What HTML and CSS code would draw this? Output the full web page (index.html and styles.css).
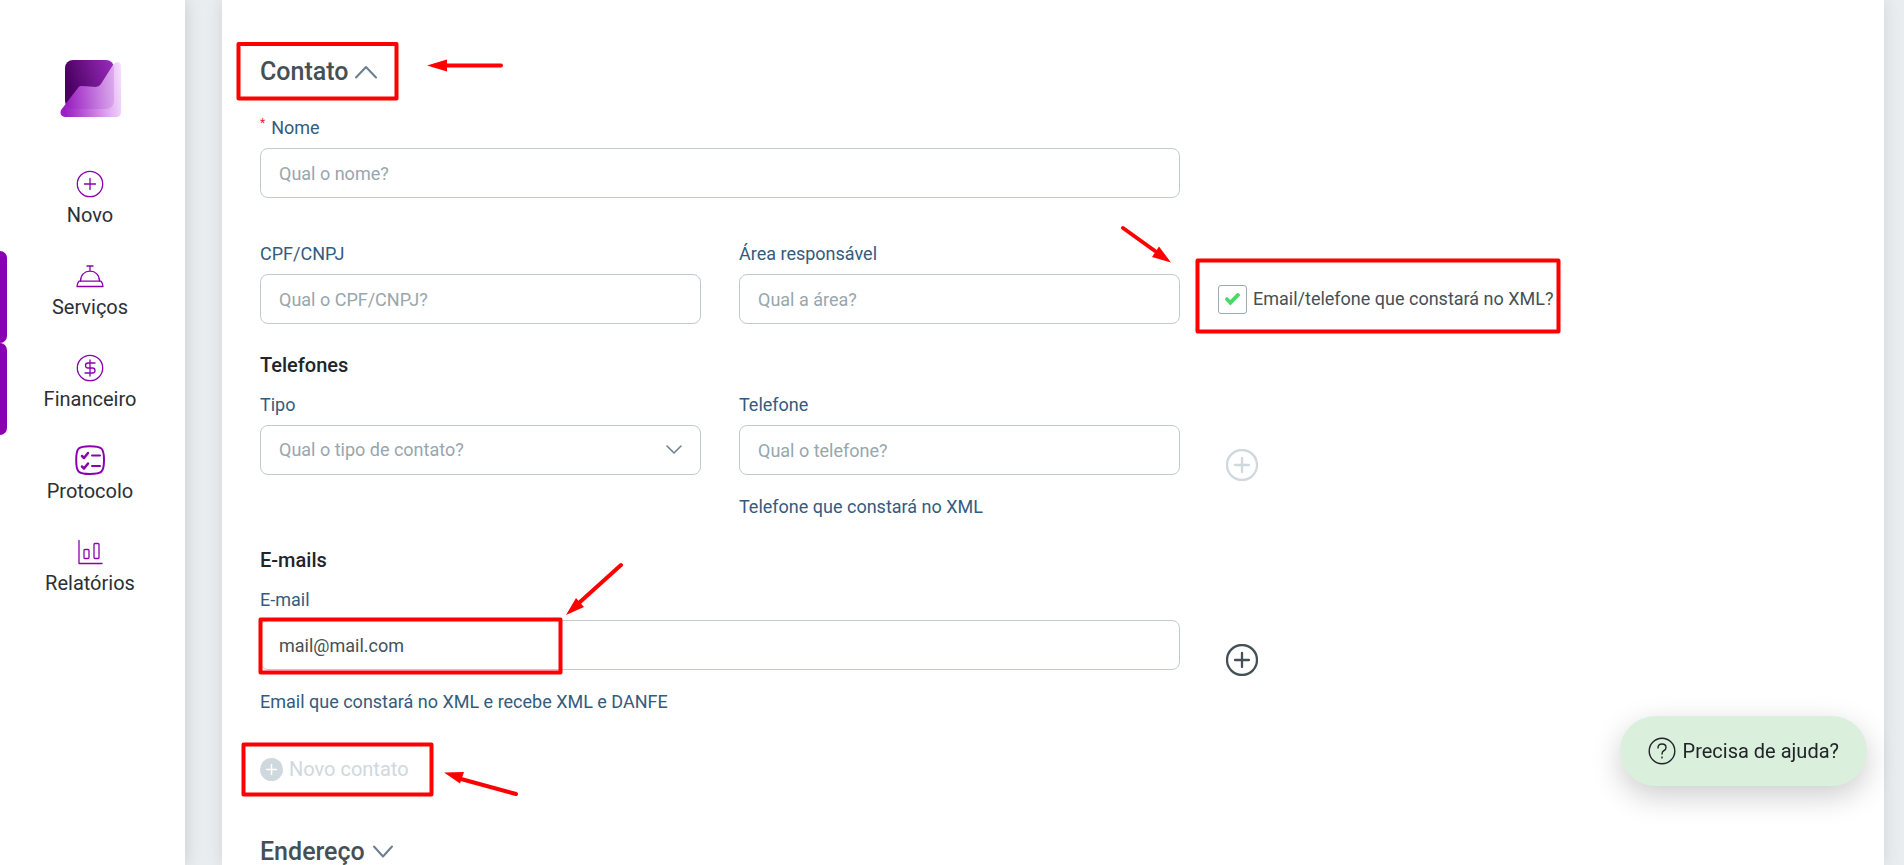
FILE: index.html
```html
<!DOCTYPE html>
<html lang="pt-BR">
<head>
  <meta charset="utf-8">
  <title>Cadastro de cliente</title>
  <link rel="stylesheet" href="styles.css">
</head>
<body>

  <nav class="sidebar">
    <a href="#" class="logo" aria-label="Início">
      <svg width="62" height="58" viewBox="0 0 62 58">
        <defs>
          <linearGradient id="dark" x1="0" x2="1" y1="0.3" y2="0">
            <stop offset="0" stop-color="#4a0060"/>
            <stop offset="1" stop-color="#9c2cc0"/>
          </linearGradient>
          <linearGradient id="light" x1="0" x2="1" y1="0.1" y2="0">
            <stop offset="0" stop-color="#9a1fc4"/>
            <stop offset="0.35" stop-color="#bd62da"/>
            <stop offset="0.7" stop-color="#dfaaf0"/>
            <stop offset="1" stop-color="#f8e0ff"/>
          </linearGradient>
          <linearGradient id="shade" x1="0" x2="1" y1="0" y2="0">
            <stop offset="0" stop-color="#8a12b4"/>
            <stop offset="1" stop-color="#b56ad4"/>
          </linearGradient>
          <clipPath id="fold">
            <path d="M1 50L18 28Q19 26 21 26L36 27Q39 27 41 24L53 5Q55 2 58 2Q61 3 61 6V52Q61 57 56 57H5Q-1 56 1 50Z"/>
          </clipPath>
        </defs>
        <rect x="5" y="0" width="49" height="49" rx="8" fill="url(#dark)"/>
        <path d="M1 50L18 28Q19 26 21 26L36 27Q39 27 41 24L53 5Q55 2 58 2Q61 3 61 6V52Q61 57 56 57H5Q-1 56 1 50Z" fill="url(#light)"/>
        <rect x="5" y="0" width="49" height="49" rx="8" fill="url(#shade)" opacity="0.3" clip-path="url(#fold)"/>
      </svg>
    </a>

    <a href="#" class="nav-item">
      <svg width="30" height="30" viewBox="0 0 30 30">
        <circle cx="15" cy="15" r="12.7"/>
        <path d="M15 9.5v11M9.5 15h11"/>
      </svg>
      Novo
    </a>
    <a href="#" class="nav-item marked">
      <svg width="30" height="30" viewBox="0 0 30 30">
        <path d="M12 5h6M15 5v5M5.5 20.2C5.5 14 9.5 10.2 15 10.2S24.5 14 24.5 20.2"/>
        <path d="M4 20.2h22q2 2 2 5.3H2q0-3.300 2-5.300z"/>
      </svg>
      Serviços
    </a>
    <a href="#" class="nav-item marked">
      <svg width="30" height="30" viewBox="0 0 30 30">
        <circle cx="15" cy="15" r="12.7"/>
        <path d="M15 7v16M20 10h-7a2.5 2.5 0 0 0 0 5h4.5a2.5 2.5 0 0 1 0 5H10"/>
      </svg>
      Financeiro
    </a>
    <a href="#" class="nav-item">
      <svg width="30" height="30" viewBox="0 0 30 30">
        <path class="heavy" d="M15 1.2C27 1.2 29 3 29 15S27 29 15 29 1.2 27 1.2 15 3 1.2 15 1.2z"/>
        <path class="heavy" d="M17 10.5h8M17 21h8"/>
        <path class="tick" d="M7 11l2 2 4-5M7 21.5l2 2 4-5"/>
      </svg>
      Protocolo
    </a>
    <a href="#" class="nav-item">
      <svg width="30" height="30" viewBox="0 0 30 30">
        <path d="M4 3.5v23h23"/>
        <rect x="9" y="12.5" width="5" height="9" rx="1"/>
        <rect x="19" y="6.5" width="5" height="15" rx="1"/>
      </svg>
      Relatórios
    </a>
  </nav>

  <main class="card">
    <form>
      <h2 class="section-title">
        <button type="button">
          Contato
          <svg width="22" height="14" viewBox="0 0 22 14"><path d="M1 12.500l10-10.500 10 10.500"/></svg>
        </button>
      </h2>

      <div class="row">
        <div class="field wide">
          <label for="nome"><sup>*</sup>Nome</label>
          <input id="nome" type="text" placeholder="Qual o nome?">
        </div>
      </div>

      <div class="row spaced">
        <div class="field">
          <label for="cpf">CPF/CNPJ</label>
          <input id="cpf" type="text" placeholder="Qual o CPF/CNPJ?">
        </div>
        <div class="field">
          <label for="area">Área responsável</label>
          <input id="area" type="text" placeholder="Qual a área?">
        </div>
        <label class="check">
          <input type="checkbox" checked>
          Email/telefone que constará no XML?
        </label>
      </div>

      <h3>Telefones</h3>
      <div class="row">
        <div class="field">
          <label for="tipo">Tipo</label>
          <div class="select">
            <select id="tipo">
              <option>Qual o tipo de contato?</option>
            </select>
            <svg width="16" height="10" viewBox="0 0 16 10"><path d="M1 1l7 7 7-7"/></svg>
          </div>
        </div>
        <div class="field">
          <label for="telefone">Telefone</label>
          <input id="telefone" type="tel" placeholder="Qual o telefone?">
          <p class="hint">Telefone que constará no XML</p>
        </div>
        <button type="button" class="add" aria-label="Adicionar telefone" disabled>
          <svg width="32" height="32" viewBox="0 0 32 32"><circle cx="16" cy="16" r="15"/><path d="M16 9v14M9 16h14"/></svg>
        </button>
      </div>

      <h3>E-mails</h3>
      <div class="row">
        <div class="field wide">
          <label for="email">E-mail</label>
          <input id="email" type="email" value="mail@mail.com">
          <p class="hint">Email que constará no XML e recebe XML e DANFE</p>
        </div>
        <button type="button" class="add" aria-label="Adicionar e-mail">
          <svg width="32" height="32" viewBox="0 0 32 32"><circle cx="16" cy="16" r="15"/><path d="M16 9v14M9 16h14"/></svg>
        </button>
      </div>

      <button type="button" class="new-contact" disabled>
        <svg width="23" height="23" viewBox="0 0 23 23"><circle cx="11.5" cy="11.5" r="11.5"/><path d="M11.5 6.5v10M6.5 11.5h10"/></svg>
        Novo contato
      </button>

      <h2 class="section-title">
        <button type="button">
          Endereço
          <svg width="22" height="14" viewBox="0 0 22 14"><path d="M2 1.500l9 10 9-10"/></svg>
        </button>
      </h2>
    </form>
  </main>

  <button type="button" class="help">
    <svg width="28" height="28" viewBox="0 0 28 28">
      <circle cx="14" cy="14" r="12.8"/>
      <path d="M10 11q0-4 4-4t4 3.500q0 2-2 3t-2 3.500"/>
      <path d="M14 20v1"/>
    </svg>
    Precisa de ajuda?
  </button>

  <!-- highlights and arrows over the form -->
  <svg class="marks" width="1904" height="865" viewBox="0 0 1904 865" aria-hidden="true">
    <rect x="238.5" y="44" width="158" height="54.5"/>
    <rect x="1197.5" y="260.5" width="361" height="71"/>
    <rect x="260.5" y="619.5" width="300" height="53"/>
    <rect x="243.5" y="744.5" width="188" height="50"/>
    <path d="M501 65.5H445M1123 228l32 23M621 565l-41 37M516 794l-55-15"/>
    <path class="tip" d="M427 65.5l20-6v12zM1171 262.5l-19-5.500 7-10.500zM566 615l10-17 8 9zM444 772.5l20-0.500-4 11.500z"/>
  </svg>

</body>
</html>
```

FILE: styles.css
```css
* {
  box-sizing: border-box;
}
body {
  margin: 0;
  height: 100vh;
  overflow: hidden;
  display: flex;
  background-color: #e9edf0;
  font-family: Roboto, sans-serif;
  font-size: 18px;
  line-height: 24px;
  color: #212529;
}
button, input, select {
  font: inherit;
}
button {
  padding: 0;
  border: 0;
  background: none;
  cursor: pointer;
}
svg {
  flex: none;
  fill: none;
  stroke: currentColor;
  stroke-linecap: round;
  stroke-linejoin: round;
}
h2, h3, p {
  margin: 0;
}

/* sidebar */
.sidebar {
  flex: none;
  width: 185px;
  padding-top: 60px;
  background-color: #fff;
  box-shadow: 0 0 16px rgba(0, 0, 0, 0.15);
}
.logo {
  display: flex;
  justify-content: center;
  height: 99px;
  padding-right: 4px;
}
.logo svg {
  stroke: none;
}
.nav-item {
  position: relative;
  display: flex;
  flex-direction: column;
  align-items: center;
  gap: 4px;
  height: 92px;
  padding: 10px 5px 0 0;
  font-size: 20px;
  color: #2b3035;
  text-decoration: none;
}
.nav-item svg {
  color: #8a00b0;
  stroke-width: 1.3;
}
.nav-item .heavy {
  stroke-width: 2;
}
.nav-item .tick {
  stroke-width: 2.5;
}
.marked::before {
  content: "";
  position: absolute;
  left: 0;
  top: 0;
  width: 7px;
  height: 100%;
  border-radius: 0 7px 7px 0;
  background-color: #8a00b0;
}

/* form */
.card {
  flex: 1;
  margin: 0 20px 0 37px;
  padding: 56px 38px 0;
  background-color: #fff;
  box-shadow: 0 0 16px rgba(0, 0, 0, 0.1);
}
.section-title {
  margin-bottom: 28px;
  font-size: 25px;
  font-weight: 500;
  line-height: 32px;
}
.section-title button {
  display: flex;
  align-items: center;
  gap: 7px;
  color: #455056;
}
.section-title svg {
  color: #6b7f92;
  stroke-width: 2;
}
h3 {
  margin: 29px 0 16px;
  font-size: 20px;
  font-weight: 500;
}
.row {
  display: grid;
  grid-template-columns: 441fr 441fr 628fr;
  column-gap: 38px;
  align-items: start;
}
.spaced {
  margin-top: 44px;
}
.wide {
  grid-column: span 2;
}
.field label {
  display: block;
  margin-bottom: 8px;
  color: #335b7e;
}
.field sup {
  margin-right: 6px;
  font-size: 12px;
  line-height: 1;
  color: #e8202a;
}
.field input, .field select {
  display: block;
  width: 100%;
  height: 50px;
  padding: 0 18px;
  border: 1px solid #c0c9d2;
  border-radius: 8px;
  background-color: #fff;
  color: #455056;
}
.field input::placeholder {
  color: #98a6ae;
  opacity: 1;
}
.select {
  position: relative;
}
.field .select select {
  appearance: none;
  color: #98a6ae;
}
.select svg {
  position: absolute;
  right: 19px;
  top: 20px;
  color: #6b7f92;
  stroke-width: 1.5;
  pointer-events: none;
}
.hint {
  margin-top: 20px;
  color: #335b7e;
}
.check {
  display: flex;
  align-items: center;
  gap: 6px;
  height: 50px;
  margin-top: 32px;
  color: #455056;
}
.check input {
  appearance: none;
  width: 29px;
  height: 29px;
  margin: 0;
  border: 1px solid #9aabb8;
  border-radius: 3px;
  display: grid;
  place-items: center;
}
.check input:checked::before {
  content: "";
  width: 16px;
  height: 13px;
  background-color: #4cd964;
  clip-path: polygon(0 51%, 15% 32%, 36% 57%, 82% 0, 100% 20%, 37% 100%);
}
.add {
  justify-self: start;
  margin: 56px 0 0 8px;
  height: 32px;
  color: #455056;
}
.add svg {
  stroke-width: 2.3;
}
.add:disabled, .new-contact:disabled {
  color: #cfd8dd;
  cursor: default;
}
.new-contact {
  display: flex;
  align-items: center;
  gap: 6px;
  margin: 43px 0 55px;
  font-size: 20px;
}
.new-contact circle {
  fill: currentColor;
  stroke: none;
}
.new-contact path {
  stroke: #fff;
  stroke-width: 1.5;
}

/* help button */
.help {
  position: fixed;
  right: 37px;
  bottom: 79px;
  display: flex;
  align-items: center;
  gap: 7px;
  height: 70px;
  padding: 0 28px;
  border-radius: 35px;
  background-color: #daf0dc;
  box-shadow: 0 10px 30px rgba(0, 0, 0, 0.2);
  font-size: 20px;
  color: #212529;
}
.help svg {
  stroke-width: 1.4;
}

/* annotations */
.marks {
  position: absolute;
  left: 0;
  top: 0;
  color: #f00;
  stroke-width: 4;
  pointer-events: none;
}
.marks .tip {
  fill: currentColor;
  stroke: none;
}
```
